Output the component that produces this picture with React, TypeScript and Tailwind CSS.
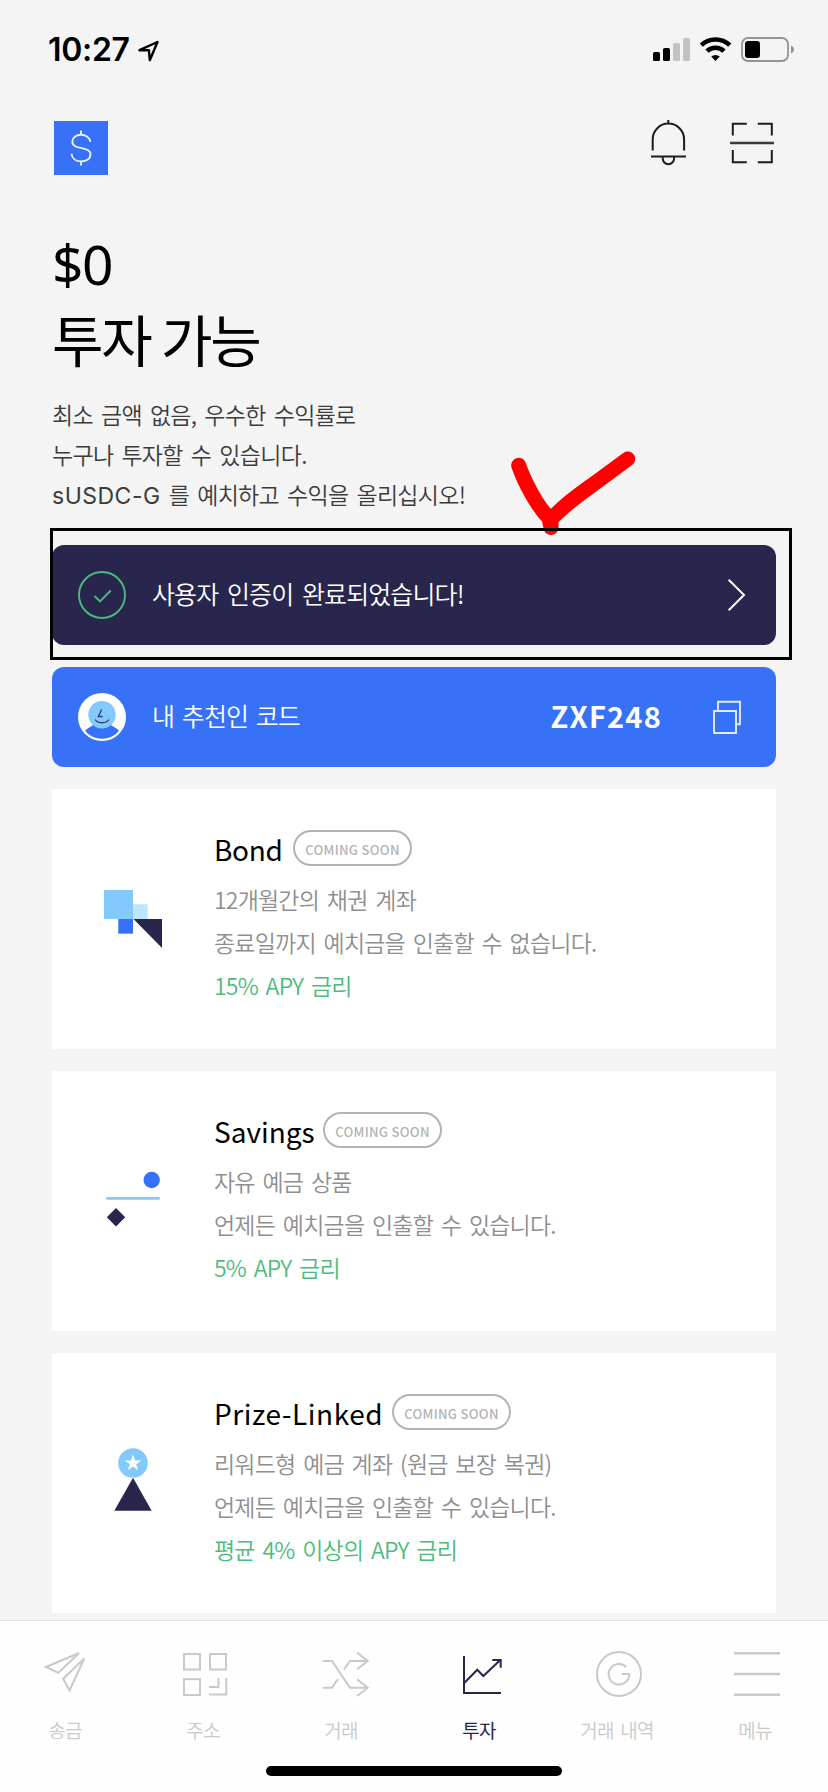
import type { ReactNode } from 'react'

type Product = {
  name: string
  nameClass: string
  lines: string[]
  rate: string
  icon: ReactNode
}

const products: Product[] = [
  {
    name: 'Bond',
    nameClass: 'w-[79px] tracking-[-0.3px]',
    lines: ['12개월간의 채권 계좌', '종료일까지 예치금을 인출할 수 없습니다.'],
    rate: '15% APY 금리',
    icon: (
      <>
        <path d="M7 7h29v29H7z" fill="#82cafb" />
        <path d="M36 21.3h14.7V36H36z" fill="#bfe4fd" />
        <path d="M21.3 36H36v14.7H21.3z" fill="#3671f7" />
        <path d="M36.5 36H65v29z" fill="#29264e" />
      </>
    ),
  },
  {
    name: 'Savings',
    nameClass: 'w-[109px] tracking-[0px]',
    lines: ['자유 예금 상품', '언제든 예치금을 인출할 수 있습니다.'],
    rate: '5% APY 금리',
    icon: (
      <>
        <circle cx="54.7" cy="15" r="8.2" fill="#3671f7" />
        <path d="M9.3 32.1h53.4v2.7H9.3z" fill="#82cafb" />
        <path d="M19 43l9.2 9.2-9.2 9.2-9.2-9.2z" fill="#29264e" />
      </>
    ),
  },
  {
    name: 'Prize-Linked',
    nameClass: 'w-[178px] tracking-[0.55px]',
    lines: ['리워드형 예금 계좌 (원금 보장 복권)', '언제든 예치금을 인출할 수 있습니다.'],
    rate: '평균 4% 이상의 APY 금리',
    icon: (
      <>
        <circle cx="36" cy="16" r="14.8" fill="#82cafb" />
        <path d="M36 7.5l2 6h6.2l-5 3.8 1.9 6-5.1-3.7-5.1 3.7 1.9-6-5-3.8H34z" fill="#fff" />
        <path d="M36 30.7l18.7 33H17.3z" fill="#29264e" />
      </>
    ),
  },
]

const tabs: { label: string; active?: boolean; icon: ReactNode }[] = [
  { label: '송금', icon: <path d="M7 17L40 3 19.3 22.9zM45.2 8.5L24.2 28.7l6.4 11.8z" /> },
  {
    label: '주소',
    icon: <path d="M7 4h16v15.5H7zM33 4h16v15.5H33zM7 29.3h16V45H7zM32 37h9.5v-9M32 44.5h17.3V28" />,
  },
  {
    label: '거래',
    icon: (
      <path d="M7.7 11H17l18 26.7h17.5M29 19.3l6-8.3h17.5M7.7 37.7H17l5.7-8.4M42 2.5L52.7 11 42 19.3M42 29.3l10.7 8.4L42 46" />
    ),
  },
  {
    label: '투자',
    active: true,
    icon: <path d="M11 6v37h37M11.5 32.7l12.8-13 6 6.3 17-16M39.3 10h8.4v7.7" />,
  },
  {
    label: '거래 내역',
    icon: (
      <>
        <circle cx="28" cy="24" r="22" />
        <path d="M35.3 17A10.3 10.3 0 1 0 38.3 24H31" />
      </>
    ),
  },
  { label: '메뉴', icon: <path d="M5 3.3h46M5 24h46M5 44.7h46" strokeWidth="2.6" /> },
]

function StatusBar() {
  return (
    <div className="flex h-[100px] items-start justify-between pl-12 pr-[33px]">
      <div className="flex items-center pt-[29px]">
        <span className="w-[89px] whitespace-nowrap font-['Inter',sans-serif] text-[32px] font-semibold leading-[41px] tracking-[-0.3px]">
          10:27
        </span>
        <svg width="24" height="24" viewBox="0 0 24 24" fill="none" stroke="#000" strokeWidth="2.4" strokeLinejoin="round">
          <path d="M2.5 12.2L20.5 4l-7.7 18.2-.9-10z" />
        </svg>
      </div>
      <svg className="mt-[34px]" width="142" height="30" viewBox="0 0 142 30">
        <rect x="0" y="18" width="7" height="9" rx="1.6" />
        <rect x="10" y="14" width="7" height="13" rx="1.6" />
        <g fill="#c2c2c2">
          <rect x="20" y="9" width="7" height="18" rx="1.6" />
          <rect x="30" y="4" width="7" height="23" rx="1.6" />
        </g>
        <g fill="none" stroke="#000" strokeWidth="4.6">
          <path d="M48.3 11.2a20.4 20.4 0 0 1 28.4 0" />
          <path d="M54 17.2a12.2 12.2 0 0 1 17 0" />
        </g>
        <path d="M58.2 22.6a6.4 6.4 0 0 1 8.6 0L62.5 27z" />
        <rect x="89" y="4" width="46" height="23" rx="6" fill="none" stroke="#949494" strokeWidth="1.8" />
        <rect x="92" y="7" width="15" height="17" rx="3.2" />
        <path d="M138 11.5c4 1.5 4 6.5 0 8z" fill="#949494" />
      </svg>
    </div>
  )
}

function Header() {
  return (
    <header className="flex h-[129px] items-start justify-between pl-[54px] pr-[53px] pt-[18px]">
      <div className="mt-[3px] size-[54px] bg-[#3671f7]">
        <svg width="54" height="54" viewBox="0 0 54 54" fill="none" stroke="#eaf1ff" strokeWidth="1.9">
          <path d="M27 9.5v4.2M27 40.3v4.3M36.2 21c-.4-4.3-4.2-7.2-9.2-7.2s-8.7 2.8-8.7 6.6c0 9.4 18.2 4.2 18.2 13 0 4.1-3.8 7-9.2 7-5.6 0-9.4-3.1-9.7-7.7" />
        </svg>
      </div>
      <div className="flex gap-[41px]">
        <svg width="38" height="48" viewBox="0 0 38 48" fill="none" stroke="#1c1c1c" strokeWidth="2">
          <path d="M18.3 2v4M2.7 32.5V21.3a15.7 15.7 0 0 1 31.4 0v11.2M1 38.5h35M12.7 38.5v2a5.7 5.7 0 0 0 11.4 0v-2" />
        </svg>
        <svg width="46" height="48" viewBox="0 0 46 48" fill="none" stroke="#1c1c1c" strokeWidth="2">
          <path d="M3.8 17.5V5.7h14M28.8 5.7h14v11.8M3.8 32v12.3h14M28.8 44.3h14V32" />
          <path d="M1 25h44" stroke="#3a3a3a" strokeWidth="2.7" />
        </svg>
      </div>
    </header>
  )
}

function Banners() {
  return (
    <div className="relative mt-[30px] flex flex-col gap-[22px]">
      <button className="flex h-[100px] items-center rounded-xl bg-[#29264e] pl-[26px] pr-[30px] text-left text-white">
        <svg width="48" height="48" viewBox="0 0 48 48" fill="none" stroke="#4dbb7a" strokeWidth="1.9">
          <circle cx="24" cy="24" r="23" />
          <path d="M16.5 25l5.5 5.5 10.7-11" />
        </svg>
        <span className="ml-[26px] flex-1 whitespace-nowrap pb-[3px] text-[25px] font-[350] tracking-[-0.9px] [word-spacing:4px]">
          사용자 인증이 완료되었습니다!
        </span>
        <svg width="20" height="34" viewBox="0 0 20 34" fill="none" stroke="#fff" strokeWidth="2">
          <path d="M2.7 1.7L18 17 2.7 32.3" />
        </svg>
      </button>

      <div className="flex h-[100px] items-center rounded-xl bg-[#3671f7] pl-[26px] pr-[34px] text-white">
        <svg width="48" height="48" viewBox="0 0 48 48">
          <circle cx="24" cy="24" r="24" fill="#fff" />
          <path d="M7 37.8C12 33 17 30.5 24 30.5s12 2.5 17 7.3C36.5 43 31 45.8 24 45.8S11.5 43 7 37.8z" fill="#3671f7" />
          <circle cx="24" cy="21.7" r="13.7" fill="#82cafb" />
          <path d="M23.6 16.5l-3.2 7h4.2M17 26.5c3 4.3 11 4.3 14 0" fill="none" stroke="#2a3c66" strokeWidth="1.3" />
        </svg>
        <span className="ml-[26px] flex-1 whitespace-nowrap pb-[3px] text-[25px] font-[350] tracking-[-0.9px] [word-spacing:3px]">
          내 추천인 코드
        </span>
        <span className="mr-[50px] whitespace-nowrap pb-[3px] text-[29px] font-bold tracking-[1.2px]">ZXF248</span>
        <svg width="30" height="36" viewBox="0 0 30 36" fill="none" stroke="#e3ecff" strokeWidth="1.9">
          <path d="M2 12h22v22H2zM6 12V2.7h22v22.6h-4" />
        </svg>
      </div>

      {/* Hand-marked tick and frame over the verification banner */}
      <svg className="absolute left-[456px] top-[-97px]" width="132" height="92" viewBox="0 0 132 92" fill="none" stroke="#f00" strokeWidth="15" strokeLinecap="round" strokeLinejoin="round">
        <path d="M10.7 17.3C16 33 29 58 41 70l2 9.5M43 79.5V71C56 58 70 47 83 38l36.7-27" />
      </svg>
      <div className="pointer-events-none absolute left-[-2px] top-[-17px] h-[132px] w-[742px] border-[3px] border-black" />
    </div>
  )
}

function ProductCard({ name, nameClass, lines, rate, icon }: Product) {
  return (
    <section className="flex h-[260px] bg-white pl-[45px]">
      <svg className="mt-[94px] shrink-0" width="72" height="72" viewBox="0 0 72 72">
        {icon}
      </svg>
      <div className="ml-[45px] pt-[41px]">
        <div className="flex h-9">
          <h2 className={`${nameClass} shrink-0 whitespace-nowrap text-[28px] leading-[38px]`}>{name}</h2>
          <span className="flex h-9 w-[119px] items-center justify-center whitespace-nowrap rounded-full border-2 border-[#b3b3b3] pt-[3px] text-[13px] font-medium tracking-[0.3px] text-[#b3b3b3]">
            COMING SOON
          </span>
        </div>
        <div className="mt-3 whitespace-nowrap text-[23px] font-[350] leading-[43px] tracking-[-0.8px] text-[#8f8f8f] [word-spacing:3.4px]">
          {lines.map((line) => (
            <p key={line}>{line}</p>
          ))}
          <p className="text-[#4dbb7a]">{rate}</p>
        </div>
      </div>
    </section>
  )
}

function TabBar() {
  return (
    <nav className="h-[172px] border-t border-[#dcdcdc] bg-[#fefefe]">
      <div className="-ml-1 flex pt-[29px]">
        {tabs.map(({ label, active, icon }) => (
          <a key={label} className={`flex w-[138px] shrink-0 flex-col items-center ${active ? 'text-[#29264e]' : 'text-[#c9c9c9]'}`}>
            <svg className="overflow-visible" width="52" height="48" viewBox="0 0 52 48" fill="none" stroke="currentColor" strokeWidth="2">
              {icon}
            </svg>
            <span className={`mt-[17px] whitespace-nowrap text-[19px] leading-[30px] tracking-[-0.7px] [word-spacing:3px] ${active ? '' : 'font-[350]'}`}>
              {label}
            </span>
          </a>
        ))}
      </div>
      <div className="mx-auto mt-[21px] h-[10px] w-[296px] rounded-full bg-black" />
    </nav>
  )
}

export default function App() {
  return (
    <div className="flex h-[1792px] w-[828px] flex-col overflow-hidden bg-[#f4f4f4] font-['Noto_Sans_CJK_KR',sans-serif] text-black">
      <StatusBar />
      <Header />
      <main className="h-[1391px] px-[52px]">
        <h1 className="whitespace-nowrap">
          <span className="block h-[76px] font-['Noto_Sans',sans-serif] text-[55px] leading-[69px] tracking-[-1.5px]">$0</span>
          <span className="block h-[76px] text-[56px] leading-[66px] tracking-[-2.2px]">투자 가능</span>
        </h1>
        <div className="mt-[13px] h-[121px] whitespace-nowrap text-[23px] font-[350] leading-[40px] tracking-[-0.7px] text-[#3c3c3c] [word-spacing:3.6px]">
          <p className="h-10">최소 금액 없음, 우수한 수익률로</p>
          <p className="h-10">누구나 투자할 수 있습니다.</p>
          <p className="h-10">
            <span className="font-['Inter',sans-serif] font-normal tracking-[0.5px]">sUSDC-G</span> 를 예치하고 수익을 올리십시오!
          </p>
        </div>
        <Banners />
        <div className="mt-[22px] flex flex-col gap-[22px]">
          {products.map((p) => (
            <ProductCard key={p.name} {...p} />
          ))}
        </div>
      </main>
      <TabBar />
    </div>
  )
}
